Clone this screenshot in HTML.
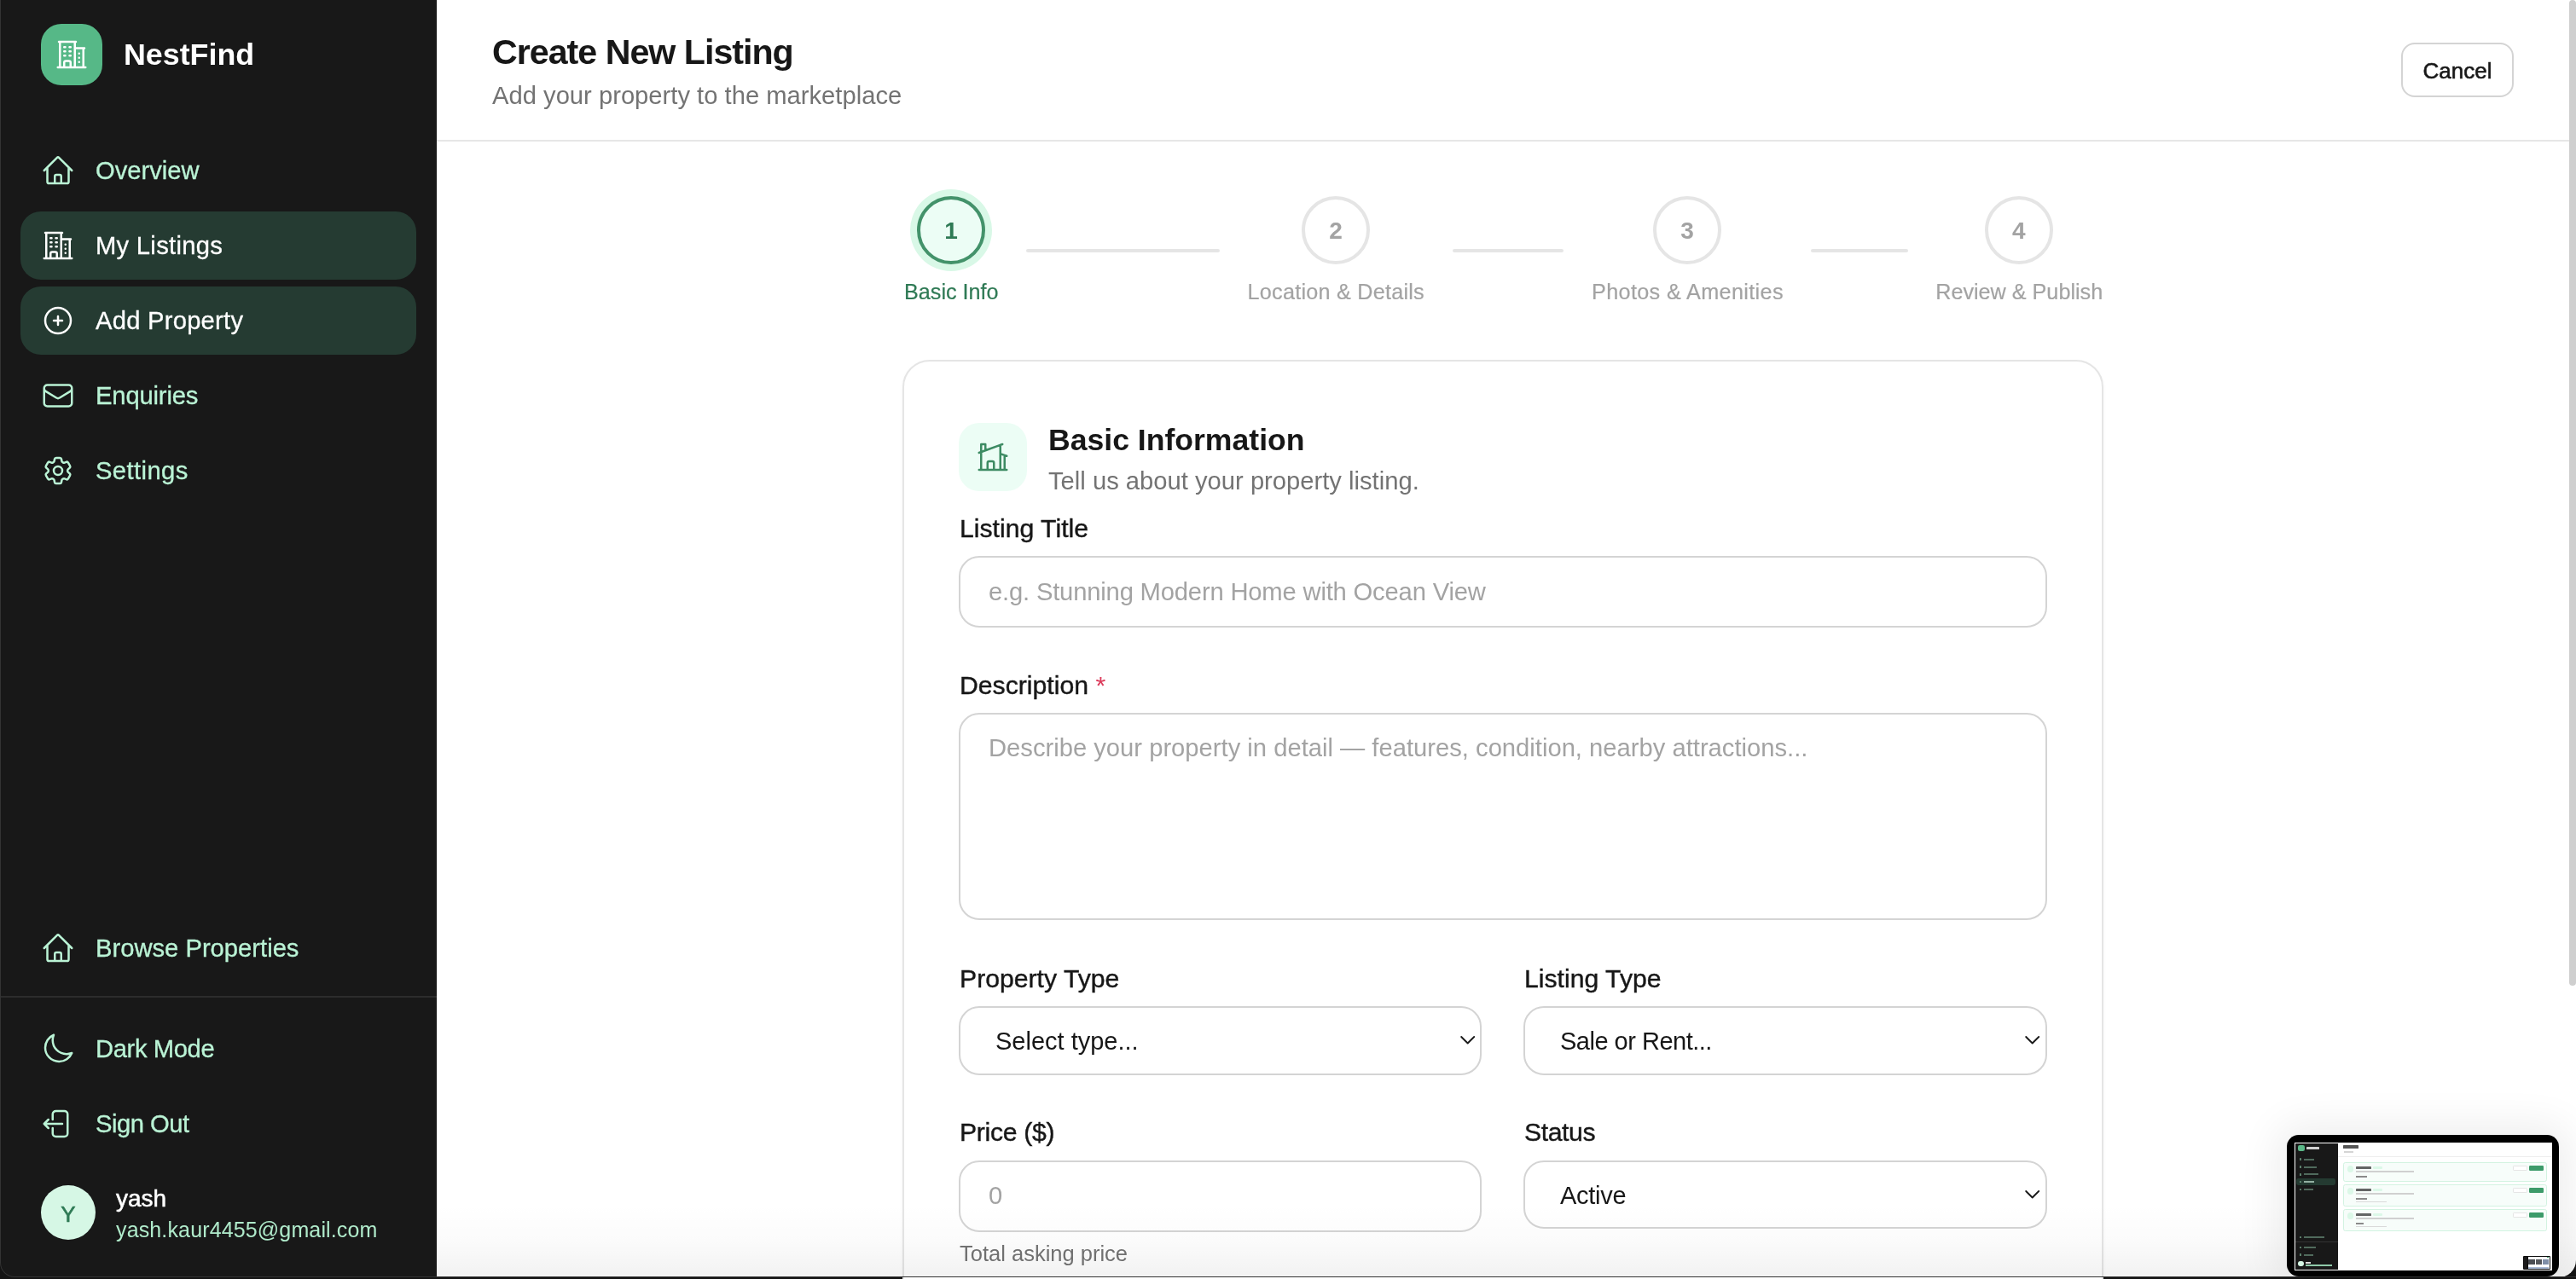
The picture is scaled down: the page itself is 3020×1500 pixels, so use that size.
<!DOCTYPE html>
<html>
<head>
<meta charset="utf-8">
<style>
*{box-sizing:border-box;margin:0;padding:0}
html,body{width:3020px;height:1500px;overflow:hidden;background:#222}
body{font-family:"Liberation Sans",sans-serif}
#z{zoom:2;width:1510px;height:750px;position:relative;overflow:hidden;background:#141414;will-change:transform}
.a{position:absolute;white-space:nowrap;line-height:1}
svg{display:block;position:absolute;overflow:visible}
/* sidebar */
#sb{position:absolute;left:0;top:0;width:256px;height:749px;background:#181818;border-bottom-left-radius:8.5px;overflow:hidden}
#sb .edge{display:none}
.logo{position:absolute;left:24px;top:14px;width:36px;height:36px;border-radius:12px;background:#56b887}
.brand{left:72.5px;top:23.3px;font-weight:bold;font-size:17.9px;color:#fff}
.nav{position:absolute;left:12px;width:232px;height:40px;border-radius:12px;color:#baf3d5}
.nav.act{background:#253b32;color:#fff}
.nav svg{left:12px;top:10px;width:20px;height:20px}
.nav .t{position:absolute;left:44px;top:12.84px;font-size:14.6px;line-height:1;white-space:nowrap;-webkit-text-stroke:0.15px currentColor}
.divider{position:absolute;left:0;top:584px;width:256px;height:1px;background:#2c2c2c}
.avatar{position:absolute;left:24px;top:695px;width:32px;height:32px;border-radius:50%;background:#d6f7e5}
.avatar span{position:absolute;left:0;width:32px;text-align:center;top:10.3px;font-size:13px;line-height:1;color:#2f7a55;-webkit-text-stroke:0.3px #2f7a55}
.uname{left:68px;top:696.2px;font-size:14px;color:#fff;-webkit-text-stroke:0.25px #fff}
.uemail{left:68px;top:714.9px;font-size:12.5px;color:#b0ebcb;letter-spacing:0.07px}
/* main */
#main{position:absolute;left:256px;top:0;width:1254px;height:749px;background:#fff;border-bottom-right-radius:10px;overflow:hidden}
.hdrline{position:absolute;left:256px;top:82px;width:1250px;height:1px;background:#e6e6e6}
.title{left:288.5px;top:20.5px;font-size:20.6px;letter-spacing:-0.5px;font-weight:bold;color:#171717}
.subtitle{left:288.5px;top:48.9px;font-size:14.6px;color:#737373}
.cancel{position:absolute;left:1407.5px;top:25px;width:66px;height:32px;border:1px solid #d4d4d4;border-radius:8px;background:#fff}
.cancel span{position:absolute;left:0;width:64px;text-align:center;top:8.9px;font-size:13px;line-height:1;color:#171717;-webkit-text-stroke:0.3px #171717}
.scroll{position:absolute;left:1506px;top:0;width:4px;height:578px;background:#cfcfcf;border-radius:2px}
/* stepper */
.circ{position:absolute;top:115px;width:40px;height:40px;border-radius:50%;border:2px solid #e5e5e5;background:#fff}
.circ span{position:absolute;left:-2px;width:40px;text-align:center;top:11.5px;font-size:14px;line-height:1;font-weight:bold;color:#a3a3a3}
.circ.on{border-color:#43926a;background:#ecfdf5;box-shadow:0 0 0 4px #d9f8e7}
.circ.on span{color:#2f7a55}
.line{position:absolute;top:146px;height:2px;background:#e5e5e5;border-radius:1px}
.slbl{top:164.8px;font-size:12.6px;color:#a3a3a3;-webkit-text-stroke:0.1px currentColor}
/* card */
.card{position:absolute;left:529px;top:211px;width:704px;height:700px;border:1px solid #e5e5e5;border-radius:16px;background:#fff;box-shadow:0 1px 2px rgba(0,0,0,0.04)}
.ibox{position:absolute;left:562px;top:248px;width:40px;height:40px;border-radius:12px;background:#ecfdf5}
.h2{left:614.5px;top:249.7px;font-size:17.8px;font-weight:bold;color:#171717}
.h2sub{left:614.5px;top:274.9px;font-size:14.6px;color:#737373}
.lbl{font-size:15.1px;color:#171717;-webkit-text-stroke:0.2px #171717}
.inp{position:absolute;border:1px solid #d4d4d4;border-radius:12px;background:#fff}
.ph{font-size:14.6px;color:#a3a3a3}
.selt{font-size:14.5px;color:#171717}
.chev{width:12px;height:8px}
.fade{position:absolute;left:256px;top:706px;width:1254px;height:43px;background:linear-gradient(to bottom,rgba(0,0,0,0) 0%,rgba(0,0,0,0.015) 50%,rgba(0,0,0,0.05) 100%)}
.bstrip{position:absolute;left:0;top:-1px;width:1510px;height:750px;border:0.5px solid #333;border-top:none;border-right:none;border-radius:0 0 0 8.5px}
/* thumbnail */
.thumb{position:absolute;left:1340.7px;top:665.7px;width:159.4px;height:83px;background:#000;border-radius:7px;box-shadow:0 0 24px 6px rgba(0,0,0,0.07)}
.thumb .scr i{position:absolute;display:block}
.thumb .scr{position:absolute;left:4.1px;top:4.1px;width:151px;height:75px;background:#fff;overflow:hidden}
</style>
</head>
<body>
<div id="z">
  <div id="sb">
    <div class="edge"></div>
    <div class="logo">
      <svg style="left:8px;top:8px;width:20px;height:20px" viewBox="0 0 24 24" fill="none" stroke="#fff" stroke-width="1.5" stroke-linecap="round" stroke-linejoin="round"><path d="M2.25 21h19.5m-18-18v18m10.5-18v18m6-13.5V21M6.75 6.75h.75m-.75 3h.75m-.75 3h.75m3-6h.75m-.75 3h.75m-.75 3h.75M6.75 21v-3.375c0-.621.504-1.125 1.125-1.125h2.25c.621 0 1.125.504 1.125 1.125V21M3 3h12m-.75 4.5H21m-3.75 3.75h.008v.008h-.008v-.008Zm0 3h.008v.008h-.008v-.008Zm0 3h.008v.008h-.008v-.008Z"/></svg>
    </div>
    <div class="a brand">NestFind</div>

    <div class="nav" style="top:80px">
      <svg viewBox="0 0 24 24" fill="none" stroke="currentColor" stroke-width="1.5" stroke-linecap="round" stroke-linejoin="round"><path d="m2.25 12 8.954-8.955c.44-.439 1.152-.439 1.591 0L21.75 12M4.5 9.75v10.125c0 .621.504 1.125 1.125 1.125H9.75v-4.875c0-.621.504-1.125 1.125-1.125h2.25c.621 0 1.125.504 1.125 1.125V21h4.125c.621 0 1.125-.504 1.125-1.125V9.75M8.25 21h8.25"/></svg>
      <span class="t">Overview</span>
    </div>
    <div class="nav act" style="top:124px">
      <svg viewBox="0 0 24 24" fill="none" stroke="currentColor" stroke-width="1.5" stroke-linecap="round" stroke-linejoin="round"><path d="M2.25 21h19.5m-18-18v18m10.5-18v18m6-13.5V21M6.75 6.75h.75m-.75 3h.75m-.75 3h.75m3-6h.75m-.75 3h.75m-.75 3h.75M6.75 21v-3.375c0-.621.504-1.125 1.125-1.125h2.25c.621 0 1.125.504 1.125 1.125V21M3 3h12m-.75 4.5H21m-3.75 3.75h.008v.008h-.008v-.008Zm0 3h.008v.008h-.008v-.008Zm0 3h.008v.008h-.008v-.008Z"/></svg>
      <span class="t" style="letter-spacing:0.14px">My Listings</span>
    </div>
    <div class="nav act" style="top:168px">
      <svg viewBox="0 0 24 24" fill="none" stroke="currentColor" stroke-width="1.5" stroke-linecap="round" stroke-linejoin="round"><path d="M12 9v6m3-3H9m12 0a9 9 0 1 1-18 0 9 9 0 0 1 18 0Z"/></svg>
      <span class="t" style="letter-spacing:0.12px">Add Property</span>
    </div>
    <div class="nav" style="top:212px">
      <svg viewBox="0 0 24 24" fill="none" stroke="currentColor" stroke-width="1.5" stroke-linecap="round" stroke-linejoin="round"><path d="M21.75 6.75v10.5a2.25 2.25 0 0 1-2.25 2.25h-15a2.25 2.25 0 0 1-2.25-2.25V6.75m19.5 0A2.25 2.25 0 0 0 19.5 4.5h-15a2.25 2.25 0 0 0-2.25 2.25m19.5 0v.243a2.25 2.25 0 0 1-1.07 1.916l-7.5 4.615a2.25 2.25 0 0 1-2.36 0L3.32 8.91a2.25 2.25 0 0 1-1.07-1.916V6.75"/></svg>
      <span class="t" style="letter-spacing:-0.08px">Enquiries</span>
    </div>
    <div class="nav" style="top:256px">
      <svg viewBox="0 0 24 24" fill="none" stroke="currentColor" stroke-width="1.5" stroke-linecap="round" stroke-linejoin="round"><path d="M9.594 3.94c.09-.542.56-.94 1.11-.94h2.593c.55 0 1.02.398 1.11.94l.213 1.281c.063.374.313.686.645.87.074.04.147.083.22.127.325.196.72.257 1.075.124l1.217-.456a1.125 1.125 0 0 1 1.37.49l1.296 2.247a1.125 1.125 0 0 1-.26 1.431l-1.003.827c-.293.241-.438.613-.43.992a7.723 7.723 0 0 1 0 .255c-.008.378.137.75.43.991l1.004.827c.424.35.534.955.26 1.43l-1.298 2.247a1.125 1.125 0 0 1-1.369.491l-1.217-.456c-.355-.133-.75-.072-1.076.124a6.47 6.47 0 0 1-.22.128c-.331.183-.581.495-.644.869l-.213 1.281c-.09.543-.56.94-1.11.94h-2.594c-.55 0-1.019-.398-1.11-.94l-.213-1.281c-.062-.374-.312-.686-.644-.87a6.52 6.52 0 0 1-.22-.127c-.325-.196-.72-.257-1.076-.124l-1.217.456a1.125 1.125 0 0 1-1.369-.49l-1.297-2.247a1.125 1.125 0 0 1 .26-1.431l1.004-.827c.292-.24.437-.613.43-.991a6.932 6.932 0 0 1 0-.255c.007-.38-.138-.751-.43-.992l-1.004-.827a1.125 1.125 0 0 1-.26-1.43l1.297-2.247a1.125 1.125 0 0 1 1.37-.491l1.216.456c.356.133.751.072 1.076-.124.072-.044.146-.086.22-.128.332-.183.582-.495.644-.869l.214-1.28Z"/><path d="M15 12a3 3 0 1 1-6 0 3 3 0 0 1 6 0Z"/></svg>
      <span class="t" style="letter-spacing:0.2px">Settings</span>
    </div>

    <div class="nav" style="top:536px">
      <svg viewBox="0 0 24 24" fill="none" stroke="currentColor" stroke-width="1.5" stroke-linecap="round" stroke-linejoin="round"><path d="m2.25 12 8.954-8.955c.44-.439 1.152-.439 1.591 0L21.75 12M4.5 9.75v10.125c0 .621.504 1.125 1.125 1.125H9.75v-4.875c0-.621.504-1.125 1.125-1.125h2.25c.621 0 1.125.504 1.125 1.125V21h4.125c.621 0 1.125-.504 1.125-1.125V9.75M8.25 21h8.25"/></svg>
      <span class="t">Browse Properties</span>
    </div>
    <div class="divider"></div>
    <div class="nav" style="top:595px">
      <svg viewBox="0 0 24 24" fill="none" stroke="currentColor" stroke-width="1.5" stroke-linecap="round" stroke-linejoin="round"><path d="M21.752 15.002A9.72 9.72 0 0 1 18 15.75c-5.385 0-9.75-4.365-9.75-9.75 0-1.33.266-2.597.748-3.752A9.753 9.753 0 0 0 3 11.25C3 16.635 7.365 21 12.75 21a9.753 9.753 0 0 0 9.002-5.998Z"/></svg>
      <span class="t" style="letter-spacing:-0.19px">Dark Mode</span>
    </div>
    <div class="nav" style="top:639px">
      <svg viewBox="0 0 24 24" fill="none" stroke="currentColor" stroke-width="1.5" stroke-linecap="round" stroke-linejoin="round"><path d="M8.25 9V5.25A2.25 2.25 0 0 1 10.5 3h6a2.25 2.25 0 0 1 2.25 2.25v13.5A2.25 2.25 0 0 1 16.5 21h-6a2.25 2.25 0 0 1-2.25-2.25V15m-3 0-3-3m0 0 3-3m-3 3H15"/></svg>
      <span class="t" style="letter-spacing:-0.25px">Sign Out</span>
    </div>
    <div class="avatar"><span>Y</span></div>
    <div class="a uname">yash</div>
    <div class="a uemail">yash.kaur4455@gmail.com</div>
  </div>

  <div id="main"></div>
  <div class="hdrline"></div>
  <div class="a title">Create New Listing</div>
  <div class="a subtitle">Add your property to the marketplace</div>
  <div class="cancel"><span>Cancel</span></div>
  <div class="scroll"></div>

  <!-- stepper -->
  <div class="circ on" style="left:537.5px"><span>1</span></div>
  <div class="line" style="left:601.5px;width:113.3px"></div>
  <div class="circ" style="left:763px"><span>2</span></div>
  <div class="line" style="left:851.7px;width:64.8px"></div>
  <div class="circ" style="left:969px"><span>3</span></div>
  <div class="line" style="left:1061.5px;width:57px"></div>
  <div class="circ" style="left:1163.4px"><span>4</span></div>
  <div class="a slbl" style="left:530px;color:#2f7a55">Basic Info</div>
  <div class="a slbl" style="left:731.3px;letter-spacing:0.12px">Location &amp; Details</div>
  <div class="a slbl" style="left:933px;letter-spacing:0.18px">Photos &amp; Amenities</div>
  <div class="a slbl" style="left:1134.6px">Review &amp; Publish</div>

  <!-- card -->
  <div class="card"></div>
  <div class="ibox">
    <svg style="left:10px;top:10px;width:20px;height:20px" viewBox="0 0 24 24" fill="none" stroke="#3d8b63" stroke-width="1.5" stroke-linecap="round" stroke-linejoin="round"><path d="M8.25 21v-4.875c0-.621.504-1.125 1.125-1.125h2.25c.621 0 1.125.504 1.125 1.125V21m0 0h4.5V3.545M12.75 21h7.5V10.75M2.25 21h1.5m18 0h-18M2.25 9l4.5-1.636M18.75 3l-1.5.545m0 6.205 3 1m1.5.5-1.5-.5M6.75 7.364V3h-3v18m3-13.636 10.5-3.819"/></svg>
  </div>
  <div class="a h2">Basic Information</div>
  <div class="a h2sub">Tell us about your property listing.</div>

  <div class="a lbl" style="left:562.5px;top:302.3px">Listing Title</div>
  <div class="inp" style="left:562px;top:326px;width:638px;height:42px"></div>
  <div class="a ph" style="left:579.5px;top:339.9px;letter-spacing:-0.09px">e.g. Stunning Modern Home with Ocean View</div>

  <div class="a lbl" style="left:562.5px;top:394.6px">Description <span style="color:#dc3b5b;-webkit-text-stroke:0">*</span></div>
  <div class="inp" style="left:562px;top:418px;width:638px;height:121.5px"></div>
  <div class="a ph" style="left:579.5px;top:431.6px">Describe your property in detail — features, condition, nearby attractions...</div>

  <div class="a lbl" style="left:562.5px;top:566.4px">Property Type</div>
  <div class="inp" style="left:562px;top:590px;width:306.5px;height:40.5px"></div>
  <div class="a selt" style="left:583.5px;top:603.4px">Select type...</div>
  <svg class="chev" style="left:855.15px;top:606px" viewBox="0 0 12 8" fill="none" stroke="#1a1a1a" stroke-width="0.95" stroke-linecap="round" stroke-linejoin="round"><path d="M1.6 2 5.35 5.75 9.1 2"/></svg>

  <div class="a lbl" style="left:893.5px;top:566.4px">Listing Type</div>
  <div class="inp" style="left:893px;top:590px;width:307px;height:40.5px"></div>
  <div class="a selt" style="left:914.5px;top:603.4px;letter-spacing:-0.25px">Sale or Rent...</div>
  <svg class="chev" style="left:1186px;top:606px" viewBox="0 0 12 8" fill="none" stroke="#1a1a1a" stroke-width="0.95" stroke-linecap="round" stroke-linejoin="round"><path d="M1.6 2 5.35 5.75 9.1 2"/></svg>

  <div class="a lbl" style="left:562.5px;top:656.7px;letter-spacing:-0.15px">Price ($)</div>
  <div class="inp" style="left:562px;top:680.5px;width:306.5px;height:42.2px"></div>
  <div class="a ph" style="left:579.5px;top:693.8px">0</div>
  <div class="a" style="left:562.5px;top:729.1px;font-size:12.75px;color:#737373">Total asking price</div>

  <div class="a lbl" style="left:893.5px;top:656.7px;letter-spacing:-0.2px">Status</div>
  <div class="inp" style="left:893px;top:680.5px;width:307px;height:40px"></div>
  <div class="a selt" style="left:914.5px;top:693.8px;letter-spacing:-0.13px">Active</div>
  <svg class="chev" style="left:1186px;top:696.6px" viewBox="0 0 12 8" fill="none" stroke="#1a1a1a" stroke-width="0.95" stroke-linecap="round" stroke-linejoin="round"><path d="M1.6 2 5.35 5.75 9.1 2"/></svg>

  <div class="fade"></div>
  <div class="bstrip"></div>

  <!-- screenshot thumbnail -->
  <div class="thumb"><div class="scr"><i style="left:0.74px;top:0.74px;width:24.9px;height:74.0px;background:#181818"></i><i style="left:2.4px;top:1.5px;width:3.6px;height:3.6px;background:#5ab787;border-radius:1.1px"></i><i style="left:7.06px;top:2.6px;width:7.8px;height:1.4px;background:#cfcfcf;border-radius:0.3px"></i><i style="left:1.34px;top:21.3px;width:23.0px;height:4.0px;background:#243a31;border-radius:1.2px"></i><i style="left:3.0px;top:9.38px;width:1.3px;height:1.3px;border:0.25px solid #6f9e85;border-radius:0.3px;opacity:0.8"></i><i style="left:5.6px;top:9.53px;width:5.92px;height:1.0px;background:#7fae95;opacity:0.55"></i><i style="left:3.0px;top:13.84px;width:1.3px;height:1.3px;border:0.25px solid #6f9e85;border-radius:0.3px;opacity:0.8"></i><i style="left:5.6px;top:13.99px;width:7.55px;height:1.0px;background:#7fae95;opacity:0.55"></i><i style="left:3.0px;top:18.3px;width:1.3px;height:1.3px;border:0.25px solid #6f9e85;border-radius:0.3px;opacity:0.8"></i><i style="left:5.6px;top:18.45px;width:8.74px;height:1.0px;background:#7fae95;opacity:0.55"></i><i style="left:3.0px;top:22.6px;width:1.3px;height:1.3px;border:0.25px solid #6f9e85;border-radius:0.3px;opacity:0.8"></i><i style="left:5.6px;top:22.75px;width:6.06px;height:1.0px;background:#dfe;opacity:0.6"></i><i style="left:3.0px;top:27.06px;width:1.3px;height:1.3px;border:0.25px solid #6f9e85;border-radius:0.3px;opacity:0.8"></i><i style="left:5.6px;top:27.21px;width:5.54px;height:1.0px;background:#7fae95;opacity:0.55"></i><i style="left:3.0px;top:55.07px;width:1.3px;height:1.3px;border:0.25px solid #6f9e85;border-radius:0.3px;opacity:0.8"></i><i style="left:5.6px;top:55.22px;width:12.01px;height:1.0px;background:#7fae95;opacity:0.55"></i><i style="left:3.0px;top:61.01px;width:1.3px;height:1.3px;border:0.25px solid #6f9e85;border-radius:0.3px;opacity:0.8"></i><i style="left:5.6px;top:61.16px;width:7.03px;height:1.0px;background:#7fae95;opacity:0.55"></i><i style="left:3.0px;top:65.32px;width:1.3px;height:1.3px;border:0.25px solid #6f9e85;border-radius:0.3px;opacity:0.8"></i><i style="left:5.6px;top:65.47px;width:5.54px;height:1.0px;background:#7fae95;opacity:0.55"></i><i style="left:0.74px;top:58.32px;width:24.9px;height:0.12px;background:#333"></i><i style="left:2.2px;top:69.5px;width:3.4px;height:3.4px;background:#d6f7e5;border-radius:50%"></i><i style="left:6.69px;top:70.0px;width:3.0px;height:1.0px;background:#ddd"></i><i style="left:6.69px;top:71.7px;width:15.379999999999999px;height:0.8px;background:#8fc9a9"></i><i style="left:28.75px;top:1.7px;width:8.85px;height:1.9px;background:#555;border-radius:0.3px"></i><i style="left:29.0px;top:5.1px;width:5.5px;height:1.0px;background:#d5d5d5"></i><i style="left:25.64px;top:8.4px;width:125.5px;height:0.12px;background:#eee"></i><i style="left:28.8px;top:11.52px;width:119.2px;height:11.51px;background:#f7fdfa;border:0.15px solid #d3f3e1;border-radius:1.3px"></i><i style="left:31.05px;top:13.82px;width:3.7px;height:3.7px;background:#dcf8e8;border-radius:50%"></i><i style="left:36.2px;top:14.12px;width:8.8px;height:1.4px;background:#4a4a4a;border-radius:0.2px;opacity:0.85"></i><i style="left:46.2px;top:14.02px;width:5.7px;height:1.6px;background:#dcf8e8;border-radius:0.5px"></i><i style="left:36.2px;top:16.72px;width:34.0px;height:0.9px;background:#d0d0d0"></i><i style="left:36.2px;top:19.52px;width:6.4px;height:1.1px;background:#8a8a8a"></i><i style="left:128.4px;top:13.72px;width:8.3px;height:3.0px;background:#fff;border:0.15px solid #e5e5e5;border-radius:0.6px"></i><i style="left:137.8px;top:13.72px;width:8.2px;height:3.0px;background:#3d9b6a;border-radius:0.6px"></i><i style="left:28.8px;top:24.52px;width:119.2px;height:13.22px;background:#f7fdfa;border:0.15px solid #d3f3e1;border-radius:1.3px"></i><i style="left:31.05px;top:26.82px;width:3.7px;height:3.7px;background:#dcf8e8;border-radius:50%"></i><i style="left:36.2px;top:27.12px;width:8.8px;height:1.4px;background:#4a4a4a;border-radius:0.2px;opacity:0.85"></i><i style="left:46.2px;top:27.02px;width:5.7px;height:1.6px;background:#dcf8e8;border-radius:0.5px"></i><i style="left:36.2px;top:29.72px;width:34.0px;height:0.9px;background:#d0d0d0"></i><i style="left:36.2px;top:32.52px;width:6.4px;height:1.1px;background:#8a8a8a"></i><i style="left:36.2px;top:34.52px;width:18.0px;height:0.8px;background:#dadada"></i><i style="left:128.4px;top:26.72px;width:8.3px;height:3.0px;background:#fff;border:0.15px solid #e5e5e5;border-radius:0.6px"></i><i style="left:137.8px;top:26.72px;width:8.2px;height:3.0px;background:#3d9b6a;border-radius:0.6px"></i><i style="left:28.8px;top:39.15px;width:119.2px;height:13.23px;background:#f7fdfa;border:0.15px solid #d3f3e1;border-radius:1.3px"></i><i style="left:31.05px;top:41.45px;width:3.7px;height:3.7px;background:#dcf8e8;border-radius:50%"></i><i style="left:36.2px;top:41.75px;width:8.8px;height:1.4px;background:#4a4a4a;border-radius:0.2px;opacity:0.85"></i><i style="left:46.2px;top:41.65px;width:5.7px;height:1.6px;background:#dcf8e8;border-radius:0.5px"></i><i style="left:36.2px;top:44.35px;width:34.0px;height:0.9px;background:#d0d0d0"></i><i style="left:36.2px;top:47.15px;width:4.4px;height:1.1px;background:#8a8a8a"></i><i style="left:36.2px;top:49.15px;width:18.0px;height:0.8px;background:#dadada"></i><i style="left:128.4px;top:41.35px;width:8.3px;height:3.0px;background:#fff;border:0.15px solid #e5e5e5;border-radius:0.6px"></i><i style="left:137.8px;top:41.35px;width:8.2px;height:3.0px;background:#3d9b6a;border-radius:0.6px"></i><i style="left:134.1px;top:66.64px;width:16px;height:8.05px;background:#0d0d0d;border-radius:0.5px"></i><i style="left:134.5px;top:67.1px;width:2.4px;height:7.2px;background:#1b1b1b"></i><i style="left:137.05px;top:67.05px;width:12.6px;height:7.25px;background:#fff"></i><i style="left:137.45px;top:68.65px;width:3.7px;height:3px;background:#4a4d52"></i><i style="left:141.55px;top:68.65px;width:3.7px;height:3px;background:#55585c"></i><i style="left:145.65px;top:68.65px;width:3.6px;height:3px;background:#7f8fa8"></i><i style="left:137.45px;top:73.1px;width:12px;height:1.2px;background:#a9bad6"></i><i style="left:148px;top:67.3px;width:1.3px;height:0.6px;background:#3d9b6a"></i></div></div>
</div>
</body>
</html>
